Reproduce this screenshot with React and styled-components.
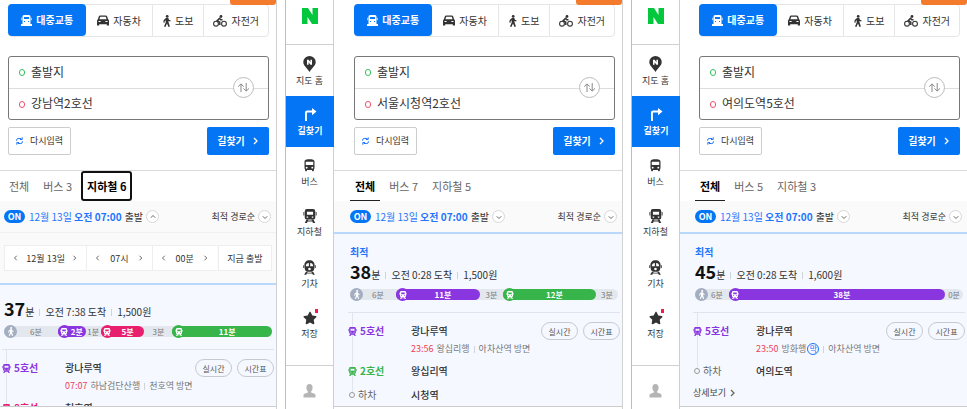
import React from 'react';
import styled, { createGlobalStyle, css } from 'styled-components';
import { MdDirectionsBus } from 'react-icons/md';
import { FaStar } from 'react-icons/fa';

const BLUE = '#0475f4';
const LINK = '#1f75fe';
const PURPLE = '#8936e0';
const GREEN = '#37b44a';
const PINK = '#e81f6f';

const GlobalStyle = createGlobalStyle`
  *, *::before, *::after {
    box-sizing: border-box;
  }

  body {
    margin: 0;
    background: #fff;
  }

  body, button, input {
    font-family: "Noto Sans CJK KR", "Noto Sans", sans-serif;
    color: #333;
  }

  button {
    margin: 0;
    padding: 0;
    border: 0;
    background: none;
    cursor: pointer;
  }

  svg {
    display: block;
    flex: none;
  }
`;

const Screen = styled.main`
  display: flex;
  gap: 8px;
  height: 100vh;
  overflow: hidden;
`;

const Shot = styled.section`
  display: flex;
  flex: 1 1 ${({ $basis }) => $basis}px;
  min-width: 0;
`;

const Rail = styled.nav`
  flex: none;
  display: flex;
  flex-direction: column;
  width: 49px;
  border-left: 1px solid #bdbdbd;
  border-right: 1px solid #cfcfcf;
`;

const Logo = styled.a`
  display: flex;
  justify-content: center;
  height: 45px;
  padding-top: 8px;
  border-bottom: 1px solid #d0d0d0;
`;

const RailItem = styled.a`
  position: relative;
  display: flex;
  flex-direction: column;
  align-items: center;
  height: 51px;
  padding-top: 11px;
  font-size: 9px;
  line-height: 16px;
  color: #333;
  text-decoration: none;
  white-space: nowrap;

  svg {
    margin-bottom: 1px;
  }

  ${({ $active }) => $active && css`
    margin-right: -1px;
    background: ${BLUE};
    color: #fff;
    font-weight: 700;
  `}
`;

const NewDot = styled.span`
  position: absolute;
  top: 9px;
  right: 15px;
  width: 3px;
  height: 4px;
  background: #f5184c;
`;

const Account = styled.a`
  display: flex;
  justify-content: center;
  height: 44px;
  margin-top: auto;
  padding-top: 18px;
  border-top: 1px solid #d0d0d0;
`;

const Panel = styled.div`
  --inset: ${({ $inset }) => $inset}px;
  position: relative;
  flex: 1;
  min-width: 0;
  display: flex;
  flex-direction: column;
  padding-bottom: 2px;
  border-right: ${({ $last }) => ($last ? '0' : '1px solid #d2d2d2')};
`;

const Ribbon = styled.span`
  position: absolute;
  top: 0;
  right: 0;
  width: 46px;
  height: 5px;
  border-radius: 0 0 3px 3px;
  background: #f47b2c;
`;

const Search = styled.form`
  padding: 4px 7px 15px calc(8px + var(--inset));
`;

const Modes = styled.div`
  display: grid;
  grid-template-columns: 78fr 66fr 52fr 65fr;
  height: 33px;
  border: 1px solid #e6e6e6;
  border-radius: 4px;
`;

const Mode = styled.button`
  display: flex;
  align-items: center;
  justify-content: center;
  gap: 4px;
  font-size: 10px;
  line-height: 16px;
  white-space: nowrap;

  & + & + & {
    border-left: 1px solid #e6e6e6;
  }

  ${({ $active }) => $active && css`
    margin: -1px 0 0 -1px;
    border-radius: 4px;
    background: ${BLUE};
    color: #fff;
    font-weight: 700;
  `}
`;

const Places = styled.div`
  position: relative;
  margin-top: 19px;
  border: 1px solid #777;
  border-radius: 3px;
`;

const Place = styled.label`
  display: flex;
  align-items: center;
  gap: 6px;
  height: 31px;
  padding-left: 10px;

  &::before {
    content: '';
    width: 6px;
    height: 7px;
    border: 1px solid ${({ $color }) => $color};
    border-radius: 3px;
  }

  & + & {
    border-top: 1px solid #ddd;
  }
`;

const PlaceInput = styled.input`
  flex: 1;
  min-width: 0;
  height: 22px;
  margin-bottom: 3px;
  padding: 0;
  border: 0;
  outline: 0;
  background: none;
  font-size: 12px;
  color: #333;

  &::placeholder {
    color: #333;
    opacity: 1;
  }
`;

const Swap = styled.button`
  position: absolute;
  top: 20px;
  right: 14px;
  display: grid;
  place-items: center;
  width: 21px;
  height: 21px;
  border: 1px solid #bbb;
  border-radius: 50%;
  background: #fff;
`;

const Actions = styled.div`
  display: flex;
  justify-content: space-between;
  height: 28px;
  margin-top: 7px;
`;

const Reset = styled.button`
  display: flex;
  align-items: center;
  justify-content: center;
  gap: 7px;
  width: 63px;
  border: 1px solid #ccc;
  border-radius: 2px;
  font-size: 9px;
  line-height: 16px;
  white-space: nowrap;
`;

const Find = styled.button`
  display: flex;
  align-items: center;
  justify-content: center;
  gap: 7px;
  width: 62px;
  padding-left: 1px;
  border-radius: 2px;
  background: ${BLUE};
  color: #fff;
  font-size: 10px;
  font-weight: 700;
  line-height: 16px;
  white-space: nowrap;
`;

const Tabs = styled.div`
  display: flex;
  gap: 4px;
  height: 31px;
  padding-left: calc(4px + var(--inset));
  border-top: 1px solid #d9d9d9;
`;

const Tab = styled.button`
  padding: 0 5px;
  font-size: 11px;
  line-height: 28px;
  color: #666;
  white-space: nowrap;

  ${({ $active }) => $active && css`
    border-bottom: 1px solid #222;
    color: #000;
    font-weight: 700;
  `}

  ${({ $focused }) => $focused && css`
    padding: 0 4px;
    border: 2px solid #111;
    border-radius: 3px;
    line-height: 25px;
  `}
`;

const Options = styled.div`
  display: flex;
  align-items: center;
  justify-content: space-between;
  height: 31px;
  padding: 0 5px 0 calc(4px + var(--inset));
  background: #fafafa;
`;

const OptionButton = styled.button`
  display: flex;
  align-items: center;
  gap: 3px;
  font-size: ${({ $small }) => ($small ? 9 : 10)}px;
  line-height: 16px;
  white-space: nowrap;
`;

const On = styled.span`
  width: 21px;
  height: 13px;
  margin-right: 1px;
  border-radius: 7px;
  background: ${BLUE};
  color: #fff;
  font-size: 9px;
  font-weight: 700;
  line-height: 13px;
  text-align: center;
`;

const When = styled.span`
  color: ${LINK};
`;

const Round = styled.span`
  display: grid;
  place-items: center;
  width: 13px;
  height: 13px;
  border: 1px solid #d8d8d8;
  border-radius: 50%;
  background: #fff;
`;

const Pickers = styled.div`
  display: grid;
  grid-template-columns: 82fr 65fr 65fr 55fr;
  padding: 12px 4px;
  border-top: 1px solid #f0f0f0;
  background: #fafafa;
`;

const Picker = styled.div`
  display: flex;
  align-items: center;
  justify-content: space-between;
  height: 26px;
  padding: 0 8px;
  border: 1px solid #eee;
  border-right: 0;
  background: #fff;
  font-size: 9px;
  white-space: nowrap;

  button {
    padding: 4px 0;
  }
`;

const Now = styled.button`
  margin-left: 1px;
  border: 1px solid #eee;
  background: #fff;
  font-size: 9px;
  white-space: nowrap;
`;

const Route = styled.article`
  flex: 1;
  min-height: 0;
  overflow: hidden;
  border-top: 2px solid #b9d8fd;
  border-bottom: 1px solid #ccc;
  background: #f5f8ff;
`;

const Summary = styled.div`
  padding: ${({ $best }) => ($best ? '10px' : '14px')} 4px 12px calc(4px + var(--inset));
`;

const Best = styled.strong`
  display: block;
  margin-bottom: 2px;
  color: ${LINK};
  font-size: 10px;
  line-height: 16px;
`;

const Facts = styled.div`
  display: flex;
  align-items: baseline;
  height: 20px;
  margin-bottom: 7px;
  font-size: 10px;
  line-height: 18px;
  white-space: nowrap;

  b {
    font-size: 18px;
    color: #111;
  }
`;

const Bar = styled.span`
  display: inline-block;
  width: 1px;
  height: 7px;
  margin: 0 ${({ $space }) => $space || 5}px;
  background: #cfd3da;
`;

const Track = styled.div`
  display: grid;
  grid-template-columns: ${({ $columns }) => $columns};
  height: 11px;
  border-radius: 6px;
  background: #e3e7ee;
`;

const Segment = styled.div`
  position: relative;
  display: flex;
  align-items: center;
  justify-content: center;
  min-width: 0;
  padding-left: ${({ $icon }) => ($icon ? 10 : 0)}px;
  border-radius: 6px;
  background: ${({ $color }) => $color || 'none'};
  color: ${({ $color }) => ($color ? '#fff' : '#777')};
  font-size: 8px;
  font-weight: ${({ $color }) => ($color ? 700 : 400)};
  line-height: 11px;
  white-space: nowrap;
`;

const SegmentIcon = styled.span`
  position: absolute;
  top: -1px;
  left: 0;
  display: grid;
  place-items: center;
  width: 13px;
  height: 13px;
  border-radius: 50%;
  background: ${({ $color }) => $color || '#a3aec0'};
`;

const Steps = styled.ol`
  position: relative;
  display: grid;
  gap: 4px;
  margin: 0 2px 0 calc(2px + var(--inset));
  padding: 8px 0 0;
  border-top: 1px solid #dde3ef;
  list-style: none;

  &::before {
    content: '';
    position: absolute;
    top: 0;
    bottom: 10px;
    left: 4px;
    width: 1px;
    background: #e0e5f0;
  }
`;

const Step = styled.li`
  position: relative;
  display: grid;
  grid-template-columns: 63px 1fr auto;
  align-items: center;
  line-height: 20px;
  font-size: 10px;
  white-space: nowrap;
`;

const Line = styled.span`
  display: flex;
  align-items: center;
  gap: 3px;
  color: ${({ $color }) => $color || '#666'};
  font-weight: ${({ $color }) => ($color ? 700 : 400)};
`;

const Stop = styled.i`
  width: 6px;
  height: 6px;
  margin-left: 1px;
  border: 1px solid #999;
  border-radius: 50%;
  background: #f5f8ff;
`;

const Station = styled.span`
  font-weight: 500;
`;

const Pills = styled.span`
  display: flex;
  align-items: center;
  gap: 5px;
  height: 20px;
`;

const Pill = styled.button`
  width: 37px;
  height: 18px;
  border: 1px solid #c6c9cf;
  border-radius: 9px;
  color: #555;
  font-size: 8px;
  white-space: nowrap;
`;

const Departure = styled.span`
  grid-column: 2 / -1;
  display: flex;
  align-items: center;
  height: 16px;
  color: #777;
  font-size: 9px;
  line-height: 16px;

  time {
    margin-right: 3px;
    color: #ef3f56;
  }
`;

const LastTrain = styled.span`
  width: 12px;
  height: 12px;
  margin-left: 1px;
  border: 1px solid ${LINK};
  border-radius: 50%;
  color: ${LINK};
  font-size: 8px;
  line-height: 10px;
  text-align: center;
`;

const Details = styled.a`
  display: flex;
  align-items: center;
  gap: 3px;
  margin: 4px 0 0 calc(2px + var(--inset));
  color: #444;
  font-size: 9px;
  line-height: 16px;
  text-decoration: none;
`;

const Chevron = ({ to = 'right', size = 6, color = '#666' }) => {
  const d = {
    right: 'M2 1l3 3-3 3',
    left: 'M5 1L2 4l3 3',
    down: 'M1 3l3 3 3-3',
    up: 'M1 5l3-3 3 3',
  }[to];
  return (
    <svg width={size} height={size} viewBox="0 0 8 8" fill="none" stroke={color} strokeWidth="1.3"><path d={d} /></svg>
  );
};

const BusIcon = () => (
  <svg width="11" height="11" viewBox="0 0 11 11" fill="currentColor">
    <path fillRule="evenodd" d="M3 0h5q1.500 0 1.500 1.500V9h-8V1.500Q1.500 0 3 0zM3 2v2h5V2zM3 6v1h1V6zm4 0v1h1V6z" />
    <path d="M.4 2.800h.8v2.400H.4zM9.800 2.800h.8v2.400h-.8zM0 9h11v2H0z" />
  </svg>
);

const CarIcon = () => (
  <svg width="12" height="11" viewBox="0 0 12 11" fill="#333">
    <path fillRule="evenodd" d="M3.200.5h5.600q1 0 1.400 1l.9 2.700q.9.500.9 1.600V10.500H9.800V9.200H2.200v1.300H0V5.800q0-1.100.9-1.600l.9-2.700q.4-1 1.400-1zM3.300 1.700L2.400 4.200h7.200L8.700 1.700zM1.500 5.900v1.200h2.100V5.900zm6.900 0v1.200h2.100V5.900z" />
  </svg>
);

const WalkIcon = ({ height = 12, color = '#333' }) => (
  <svg width={height * 8 / 12} height={height} viewBox="0 0 8 12" fill={color}>
    <circle cx="4.200" cy="1.400" r="1.400" />
    <path d="M3 3.100h2.300l.7 1.600 1.700.8-.5 1.100-1.800-.7.2 1.700 1.300 4-1.400.4L4 8.500 2.400 12 1 11.400l1.700-3.900V5.300l-.9.600-.3 1.800-1.200-.2.400-2.500z" />
  </svg>
);

const BikeIcon = () => (
  <svg width="14" height="12" viewBox="0 0 14 12">
    <g fill="none" stroke="#333" strokeWidth="1.100">
      <circle cx="3" cy="8.700" r="2.400" />
      <circle cx="11" cy="8.700" r="2.400" />
      <path strokeWidth="1.500" d="M9.500 4.800H7.800L6.500 3.300 4.200 5.600l2.600 1.600V10" />
    </g>
    <circle cx="8" cy="1.500" r="1.400" fill="#333" />
  </svg>
);

// used both for the rail and, smaller, for every subway leg
const SubwayIcon = ({ size = 14 }) => (
  <svg width={size} height={size} viewBox="0 0 16 16" fill="currentColor">
    <path fillRule="evenodd" d="M4.500 0h7Q14 0 14 2.500V10q0 2-2 2H4q-2 0-2-2V2.500Q2 0 4.500 0zM4.500 3V6.500h7V3zM4.200 8.500v1.400h1.700V8.500zm5.900 0v1.400h1.700V8.500z" />
    <path d="M.5 3.500h1V7.500h-1zM14.500 3.500h1V7.500h-1zM4 12h2.200L4.600 16H2zM9.800 12H12l2 4h-2.600zM4.500 13h7v1.300h-7z" />
  </svg>
);

const TrainIcon = () => (
  <svg width="15" height="15" viewBox="0 0 16 16" fill="currentColor">
    <path fillRule="evenodd" d="M8 .3c3.600 0 5.500 2.200 5.500 5.700 0 3.200-1 6.200-3 6.500h-5c-2-.3-3-3.300-3-6.500C2.500 2.500 4.400.3 8 .3zM7.300 3.200C5.300 3.300 4.200 4.400 4.100 6.700h3.200zm1.400 0v3.500h3.200c-.1-2.300-1.200-3.400-3.200-3.500zM8 8.200a1.400 1.400 0 100 2.800 1.400 1.400 0 000-2.800z" />
    <path d="M1.200 5.500H2v3h-.8zM14 5.500h.8v3H14zM4 12.800h2L4.500 15.700H2.300zM10 12.800h2l1.700 2.900h-2.200zM4.500 13.500h7v1h-7z" />
  </svg>
);

const PinIcon = () => (
  <svg width="13" height="16" viewBox="0 0 13 16" fill="#333">
    <path d="M6.500 0A6.200 6.200 0 0112.700 6.200C12.700 9.500 9 11.800 6.500 16 4 11.800.3 9.500.3 6.200A6.200 6.200 0 016.500 0z" />
    <path fill="#fff" d="M4 3.700h1.700l1.700 2.500V3.700H9v5H7.400L5.600 6.200v2.500H4z" />
  </svg>
);

const TurnIcon = () => (
  <svg width="14" height="15" viewBox="0 0 14 15" fill="#fff">
    <path d="M2 14V5.500Q2 3.600 4 3.600h5V1l4.500 3.600L9 8.200V5.400H4.700q-.8 0-.8.8V14z" />
  </svg>
);

const PersonIcon = () => (
  <svg width="13" height="14" viewBox="0 0 13 14" fill="#b5b5b5">
    <path d="M6.500 0C8.500 0 9.600 1.400 9.600 3.500c0 1.900-.7 3.300-1.500 4v1l3.400 1.200q1 .4 1 1.500V13.500H.5V11.200q0-1.100 1-1.500l3.400-1.200v-1c-.8-.7-1.500-2.100-1.500-4C3.400 1.400 4.500 0 6.500 0z" />
  </svg>
);

const SwapIcon = () => (
  <svg width="13" height="9" viewBox="0 0 13 9" fill="none" stroke="#888">
    <path d="M4 9V1M1.200 3.600L4 .9l2.800 2.700M9.200 0v8M6.500 5.400L9.200 8.100 12 5.400" />
  </svg>
);

const RefreshIcon = () => (
  <svg width="7" height="8" viewBox="0 0 7 8" fill="none" stroke={LINK} strokeWidth="1">
    <path d="M.6 3.700V3Q.7 1.500 2.200 1.500h3M6.400 4.300V5Q6.300 6.500 4.800 6.500h-3" />
    <path d="M6.200.3v2.200H4M.8 7.700V5.500H3" />
  </svg>
);

const rail = [
  { label: '지도 홈', icon: <PinIcon /> },
  { label: '길찾기', icon: <TurnIcon />, active: true },
  { label: '버스', icon: <MdDirectionsBus size={15} /> },
  { label: '지하철', icon: <SubwayIcon /> },
  { label: '기차', icon: <TrainIcon /> },
  { label: '저장', icon: <FaStar size={14} />, dot: true },
];

const trips = [
  {
    to: '강남역2호선',
    tabs: ['전체', '버스 3', '지하철 6'],
    tab: 2,
    open: true,
    minutes: 37,
    arrival: '오전 7:38 도착',
    fare: '1,500원',
    segments: [
      { size: 54, label: '6분', walk: true },
      { size: 28, label: '2분', color: PURPLE },
      { size: 15, label: '1분' },
      { size: 44, label: '5분', color: PINK },
      { size: 28, label: '3분' },
      { size: 100, label: '11분', color: GREEN },
    ],
    steps: [
      { line: '5호선', color: PURPLE, station: '광나루역', time: '07:07', bound: '하남검단산행', way: '천호역 방면' },
      { line: '8호선', color: PINK, station: '천호역' },
    ],
  },
  {
    to: '서울시청역2호선',
    tabs: ['전체', '버스 7', '지하철 5'],
    tab: 0,
    minutes: 38,
    arrival: '오전 0:28 도착',
    fare: '1,500원',
    segments: [
      { size: 46, label: '6분', walk: true },
      { size: 84, label: '11분', color: PURPLE },
      { size: 23, label: '3분' },
      { size: 93, label: '12분', color: GREEN },
      { size: 22, label: '3분' },
    ],
    steps: [
      { line: '5호선', color: PURPLE, station: '광나루역', time: '23:56', bound: '왕십리행', way: '아차산역 방면' },
      { line: '2호선', color: GREEN, station: '왕십리역' },
      { line: '하차', station: '시청역' },
    ],
  },
  {
    to: '여의도역5호선',
    tabs: ['전체', '버스 5', '지하철 3'],
    tab: 0,
    minutes: 45,
    arrival: '오전 0:28 도착',
    fare: '1,600원',
    details: true,
    segments: [
      { size: 34, label: '6분', walk: true },
      { size: 217, label: '38분', color: PURPLE },
      { size: 18, label: '0분' },
    ],
    steps: [
      { line: '5호선', color: PURPLE, station: '광나루역', time: '23:50', bound: '방화행', last: true, way: '아차산역 방면' },
      { line: '하차', station: '여의도역' },
    ],
  },
];

function SideRail() {
  return (
    <Rail>
      <Logo href="#" aria-label="NAVER">
        <svg width="16" height="16" viewBox="0 0 16 16" fill="#03c73c"><path d="M0 0h6l4.500 7V0H16v16h-6L5.500 9v7H0z" /></svg>
      </Logo>
      {rail.map(({ label, icon, active, dot }) => (
        <RailItem key={label} href="#" $active={active}>
          {icon}
          {label}
          {dot && <NewDot />}
        </RailItem>
      ))}
      <Account href="#" aria-label="내 정보"><PersonIcon /></Account>
    </Rail>
  );
}

function SearchForm({ to }) {
  return (
    <Search onSubmit={(e) => e.preventDefault()}>
      <Modes>
        <Mode type="button" $active><BusIcon />대중교통</Mode>
        <Mode type="button"><CarIcon />자동차</Mode>
        <Mode type="button"><WalkIcon />도보</Mode>
        <Mode type="button"><BikeIcon />자전거</Mode>
      </Modes>
      <Places>
        <Place $color="#34c25f">
          <PlaceInput aria-label="출발지" placeholder="출발지" />
        </Place>
        <Place $color="#f0526a">
          <PlaceInput aria-label="도착지" defaultValue={to} />
        </Place>
        <Swap type="button" aria-label="출발지와 도착지 바꾸기"><SwapIcon /></Swap>
      </Places>
      <Actions>
        <Reset type="reset"><RefreshIcon />다시입력</Reset>
        <Find type="submit">길찾기<Chevron size={8} color="#fff" /></Find>
      </Actions>
    </Search>
  );
}

function TimePickers() {
  return (
    <Pickers>
      {['12월 13일', '07시', '00분'].map((value) => (
        <Picker key={value}>
          <button type="button" aria-label="이전"><Chevron to="left" /></button>
          {value}
          <button type="button" aria-label="다음"><Chevron /></button>
        </Picker>
      ))}
      <Now type="button">지금 출발</Now>
    </Pickers>
  );
}

function RouteCard({ trip }) {
  return (
    <Route>
      <Summary $best={!trip.open}>
        {!trip.open && <Best>최적</Best>}
        <Facts>
          <b>{trip.minutes}</b>
          분
          <Bar />
          {trip.arrival}
          <Bar />
          {trip.fare}
        </Facts>
        <Track $columns={trip.segments.map(({ size }) => `${size}fr`).join(' ')}>
          {trip.segments.map(({ label, color, walk }, i) => (
            <Segment key={i} $color={color} $icon={walk || color}>
              {(walk || color) && (
                <SegmentIcon $color={color}>
                  {walk ? <WalkIcon height={9} color="#fff" /> : <SubwayIcon size={8} />}
                </SegmentIcon>
              )}
              {label}
            </Segment>
          ))}
        </Track>
      </Summary>
      <Steps>
        {trip.steps.map(({ line, color, station, time, bound, last, way }) => (
          <Step key={station}>
            <Line $color={color}>
              {color ? <SubwayIcon size={9} /> : <Stop />}
              {line}
            </Line>
            <Station>{station}</Station>
            {time && (
              <>
                <Pills>
                  <Pill type="button">실시간</Pill>
                  <Pill type="button">시간표</Pill>
                </Pills>
                <Departure>
                  <time>{time}</time>
                  {bound}
                  {last && <LastTrain>막</LastTrain>}
                  <Bar $space={4} />
                  {way}
                </Departure>
              </>
            )}
          </Step>
        ))}
      </Steps>
      {trip.details && <Details href="#">상세보기<Chevron size={8} /></Details>}
    </Route>
  );
}

export default function App() {
  return (
    <>
      <GlobalStyle />
      <Screen>
        {trips.map((trip, i) => (
          <Shot key={trip.to} $basis={[277, 338, 336][i]}>
            {i > 0 && <SideRail />}
            <Panel $inset={[0, 12, 11][i]} $last={i === trips.length - 1}>
              <Ribbon />
              <SearchForm to={trip.to} />
              <Tabs>
                {trip.tabs.map((tab, n) => (
                  <Tab key={tab} type="button" $active={n === trip.tab} $focused={n === trip.tab && trip.open}>{tab}</Tab>
                ))}
              </Tabs>
              <Options>
                <OptionButton type="button">
                  <On>ON</On>
                  <When>
                    12월 13일
                    {' '}
                    <b>오전 07:00</b>
                  </When>
                  출발
                  <Round><Chevron to={trip.open ? 'up' : 'down'} /></Round>
                </OptionButton>
                <OptionButton type="button" $small>
                  최적 경로순
                  <Round><Chevron to="down" /></Round>
                </OptionButton>
              </Options>
              {trip.open && <TimePickers />}
              <RouteCard trip={trip} />
            </Panel>
          </Shot>
        ))}
      </Screen>
    </>
  );
}
